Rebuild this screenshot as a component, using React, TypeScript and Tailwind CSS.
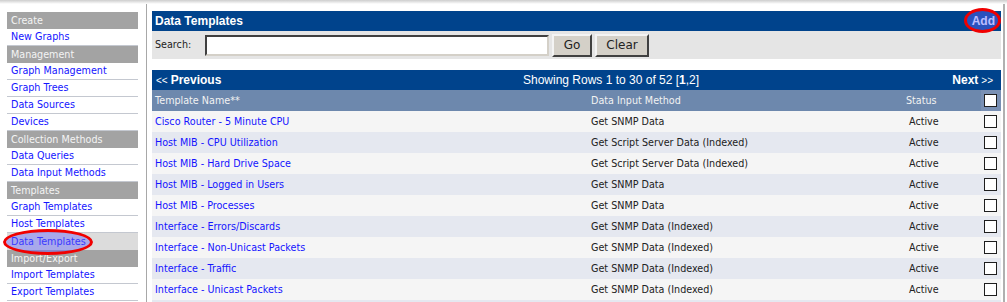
import React from "react";

type SideItem = { h?: string; l?: string; sel?: boolean };

const sidebar: SideItem[] = [
  { h: "Create" },
  { l: "New Graphs" },
  { h: "Management" },
  { l: "Graph Management" },
  { l: "Graph Trees" },
  { l: "Data Sources" },
  { l: "Devices" },
  { h: "Collection Methods" },
  { l: "Data Queries" },
  { l: "Data Input Methods" },
  { h: "Templates" },
  { l: "Graph Templates" },
  { l: "Host Templates" },
  { l: "Data Templates", sel: true },
  { h: "Import/Export" },
  { l: "Import Templates" },
  { l: "Export Templates" },
];

const rows: [string, string][] = [
  ["Cisco Router - 5 Minute CPU", "Get SNMP Data"],
  ["Host MIB - CPU Utilization", "Get Script Server Data (Indexed)"],
  ["Host MIB - Hard Drive Space", "Get Script Server Data (Indexed)"],
  ["Host MIB - Logged in Users", "Get SNMP Data"],
  ["Host MIB - Processes", "Get SNMP Data"],
  ["Interface - Errors/Discards", "Get SNMP Data (Indexed)"],
  ["Interface - Non-Unicast Packets", "Get SNMP Data (Indexed)"],
  ["Interface - Traffic", "Get SNMP Data (Indexed)"],
  ["Interface - Unicast Packets", "Get SNMP Data (Indexed)"],
];

function Check() {
  return <div className="w-[13px] h-[13px] bg-white border border-[#1e1e1e]" />;
}

export default function App() {
  return (
    <div className="relative w-[1007px] h-[302px] overflow-hidden bg-white font-['DejaVu_Sans',sans-serif] text-[9.6px]">
      <div className="h-[4px] bg-gradient-to-b from-[#cdcdcd] to-white" />
      <div className="flex">
        {/* Sidebar */}
        <aside className="w-[147px] pl-[7px] pr-[8px] pt-[8px] border-r border-[#a8a8a8]">
          {sidebar.map((s, i) =>
            s.h ? (
              <div key={i} className="h-[17px] bg-[#a3a3a3] text-[#f4f4f4] pl-[4px] pt-[1px] flex items-center">
                {s.h}
              </div>
            ) : (
              <div
                key={i}
                className={
                  s.sel
                    ? "relative h-[17px] bg-[#dcdcdc] pl-[4px] pt-[1px] flex items-center text-[#1414ff]"
                    : "h-[17px] border-b border-[#c4c8d0] pl-[4px] pt-[1px] flex items-center text-[#1414ff]"
                }
              >
                {s.l}
                {s.sel && (
                  <div className="absolute left-[-4px] top-[-4px] w-[90px] h-[26px] rounded-[50%] border-[3px] border-[#f00000] bg-[rgba(100,100,255,0.43)] pointer-events-none" />
                )}
              </div>
            )
          )}
        </aside>

        {/* Main */}
        <main className="w-[858px] pl-[5px] pr-[2px] pt-[7px] border-r-2 border-[#b0b0b0]">
          {/* Title bar */}
          <div className="relative h-[20px] bg-[#00438c] flex items-center justify-between pl-[3px] pr-[6px] font-['Liberation_Sans',Arial,sans-serif] font-bold text-[12px] text-white">
            <span>Data Templates</span>
            <span>Add</span>
            <div className="absolute right-0 top-[-3px] w-[37px] h-[25px] rounded-[50%] border-[3px] border-[#f00000] bg-[rgba(100,100,255,0.43)] pointer-events-none" />
          </div>

          {/* Search row */}
          <div className="h-[28px] bg-[#e5e5e5] flex items-center pl-[3px]">
            <span className="w-[50px] pt-[1px] text-[#222]">Search:</span>
            <div className="w-[344px] h-[21px] bg-white border-2 border-t-[#404040] border-l-[#404040] border-r-[#d4d0c8] border-b-[#d4d0c8]" />
            <button className="ml-[3px] w-[40px] h-[23px] bg-[#d4d0c8] border-2 border-t-[#f4f4f4] border-l-[#f4f4f4] border-r-[#404040] border-b-[#404040] text-[12px] text-[#222] font-['DejaVu_Sans',sans-serif] flex items-center justify-center">
              Go
            </button>
            <button className="ml-[3px] w-[54px] h-[23px] bg-[#d4d0c8] border-2 border-t-[#f4f4f4] border-l-[#f4f4f4] border-r-[#404040] border-b-[#404040] text-[12px] text-[#222] font-['DejaVu_Sans',sans-serif] flex items-center justify-center">
              Clear
            </button>
          </div>

          <div className="h-[11px]" />

          {/* Pagination bar */}
          <div className="h-[20px] bg-[#00438c] flex items-center text-white font-['Liberation_Sans',Arial,sans-serif] text-[12px]">
            <div className="w-[371px] pl-[4px] flex items-center gap-[3px]">
              <span className="text-[10px]">&lt;&lt;</span>
              <span className="font-bold">Previous</span>
            </div>
            <span>
              Showing Rows 1 to 30 of 52 [<b>1</b>,2]
            </span>
            <div className="ml-auto pr-[8px] flex items-center gap-[3px]">
              <span className="font-bold">Next</span>
              <span className="text-[10px]">&gt;&gt;</span>
            </div>
          </div>

          {/* Header row */}
          <div className="h-[21px] bg-[#6d88ad] grid grid-cols-[436px_316px_77px_20px] text-[#f2f2f2]">
            <div className="pl-[3px] pt-[1px] flex items-center">Template Name**</div>
            <div className="pl-[3px] pt-[1px] flex items-center">Data Input Method</div>
            <div className="pl-[2px] pt-[1px] flex items-center">Status</div>
            <div className="bg-[#7990b4] pl-[3px] flex items-center">
              <Check />
            </div>
          </div>

          {/* Data rows */}
          {rows.map(([name, method], i) => (
            <div
              key={i}
              className={
                "h-[21px] grid grid-cols-[436px_316px_77px_20px] " +
                (i % 2 === 0 ? "bg-[#f5f5f5]" : "bg-[#e5e8f0]")
              }
            >
              <div className="pl-[3px] pt-[1px] flex items-center text-[#1414ff]">{name}</div>
              <div className="pl-[3px] pt-[1px] flex items-center text-[#222]">{method}</div>
              <div className="pl-[5px] pt-[1px] flex items-center text-[#222]">Active</div>
              <div className="pl-[3px] flex items-center">
                <Check />
              </div>
            </div>
          ))}
          <div className="h-[21px] bg-[#e5e8f0]" />
        </main>
      </div>
    </div>
  );
}
